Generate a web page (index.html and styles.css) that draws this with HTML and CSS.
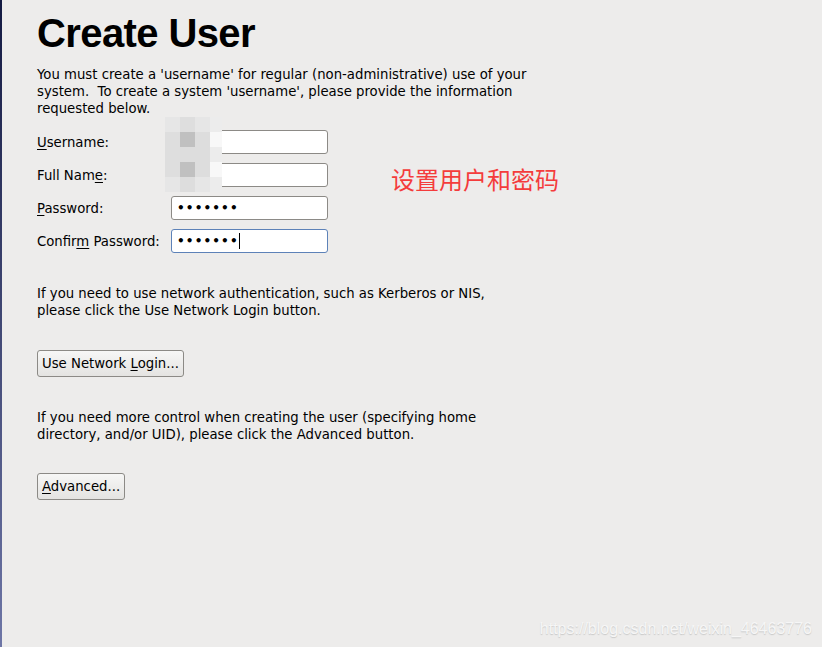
FILE: index.html
```html
<!DOCTYPE html>
<html>
<head>
<meta charset="utf-8">
<link rel="stylesheet" href="styles.css">
</head>
<body>
<div class="page">
  <main class="content">
    <h1 class="title">Create User</h1>
    <p class="para intro">You must create a 'username' for regular (non-administrative) use of your<br>system.&nbsp; To create a system 'username', please provide the information<br>requested below.</p>
    <div class="form">
      <div class="row">
        <label class="label"><u>U</u>sername:</label>
        <div class="input"></div>
      </div>
      <div class="row">
        <label class="label">Full Nam<u>e</u>:</label>
        <div class="input"></div>
      </div>
      <div class="row">
        <label class="label"><u>P</u>assword:</label>
        <div class="input"><span class="dots">•••••••</span></div>
      </div>
      <div class="row">
        <label class="label">Confir<u>m</u> Password:</label>
        <div class="input focused"><span class="dots">•••••••</span><span class="caret"></span></div>
      </div>
      <div class="mosaic">
        <i class="m1"></i><i class="m2"></i><i class="m1"></i><i class="m0"></i>
        <i class="m2"></i><i class="m4"></i><i class="m3"></i><i class="m5"></i>
        <i class="m2"></i><i class="m3"></i><i class="m3"></i><i class="m0"></i>
        <i class="m2"></i><i class="m4"></i><i class="m3"></i><i class="m5"></i>
        <i class="m1"></i><i class="m3"></i><i class="m1"></i><i class="m0"></i>
      </div>
      <div class="note">设置用户和密码</div>
    </div>
    <p class="para net">If you need to use network authentication, such as Kerberos or NIS,<br>please click the Use Network Login button.</p>
    <button class="btn">Use Network <u>L</u>ogin...</button>
    <p class="para adv">If you need more control when creating the user (specifying home<br>directory, and/or UID), please click the Advanced button.</p>
    <button class="btn btn-adv"><u>A</u>dvanced...</button>
  </main>
  <div class="watermark">https://blog.csdn.net/weixin_46463776</div>
</div>
</body>
</html>
```
FILE: styles.css
```css
html, body {
  margin: 0;
  padding: 0;
  height: 100%;
}
body {
  background: #edeceb;
  font-family: "DejaVu Sans", sans-serif;
  font-size: 13.25px;
  color: #000;
}
.page {
  position: relative;
  height: 647px;
  box-sizing: border-box;
  border-left: 2px solid #1b1f4a;
  border-image: linear-gradient(#141a42, #6e76a6) 1;
  overflow: hidden;
}
.content {
  display: flex;
  flex-direction: column;
  align-items: flex-start;
  padding: 11px 0 0 35px;
}
.title {
  font-family: "Liberation Sans", Arial, sans-serif;
  font-weight: bold;
  font-size: 40px;
  line-height: 44px;
  letter-spacing: -0.6px;
  margin: 0;
}
.para {
  margin: 0;
  line-height: 17px;
}
.intro { margin-top: 11px; }
.form {
  position: relative;
  display: flex;
  flex-direction: column;
  gap: 9px;
  margin-top: 13px;
}
.row {
  display: flex;
  align-items: center;
  height: 24px;
}
.label {
  width: 134px;
}
u { text-decoration: underline; text-underline-offset: 2px; }
.input {
  width: 157px;
  height: 24px;
  box-sizing: border-box;
  background: #fff;
  border: 1px solid #8c8a86;
  border-radius: 3px;
  display: flex;
  align-items: center;
  padding-left: 5px;
}
.input.focused {
  border-color: #5d82b8;
}
.dots {
  font-size: 12px;
  letter-spacing: 1.15px;
  font-weight: bold;
}
.caret {
  display: inline-block;
  width: 1px;
  height: 16px;
  background: #000;
}
.mosaic {
  position: absolute;
  left: 128px;
  top: -13px;
  display: grid;
  grid-template-columns: 15px 15px 15px 12px;
  grid-template-rows: repeat(5, 15px);
}
.mosaic i { display: block; }
.mosaic .m0 { background: #ececec; }
.mosaic .m1 { background: #e6e6e6; }
.mosaic .m2 { background: #dedede; }
.mosaic .m3 { background: #dddddd; }
.mosaic .m4 { background: #c0c0c0; }
.mosaic .m5 { background: #f8f8f8; }
.note {
  position: absolute;
  left: 354px;
  top: 35px;
  white-space: nowrap;
  font-family: "Noto Sans CJK SC", sans-serif;
  font-size: 24px;
  line-height: 28px;
  color: #f43c3c;
}
.net { margin-top: 32px; }
.adv { margin-top: 32px; }
.btn {
  margin-top: 31px;
  height: 27px;
  padding: 0 4px;
  font-family: "DejaVu Sans", sans-serif;
  font-size: 13.25px;
  color: #000;
  background: linear-gradient(#f7f7f6, #e4e3e1);
  border: 1px solid #8c8a86;
  border-radius: 3px;
}
.btn-adv { margin-top: 30px; }
.watermark {
  position: absolute;
  right: 10px;
  bottom: 9px;
  font-family: "Liberation Sans", Arial, sans-serif;
  font-size: 16px;
  color: #f6f6f6;
  text-shadow: 0 1px 1px #c8c8c8;
}
```
